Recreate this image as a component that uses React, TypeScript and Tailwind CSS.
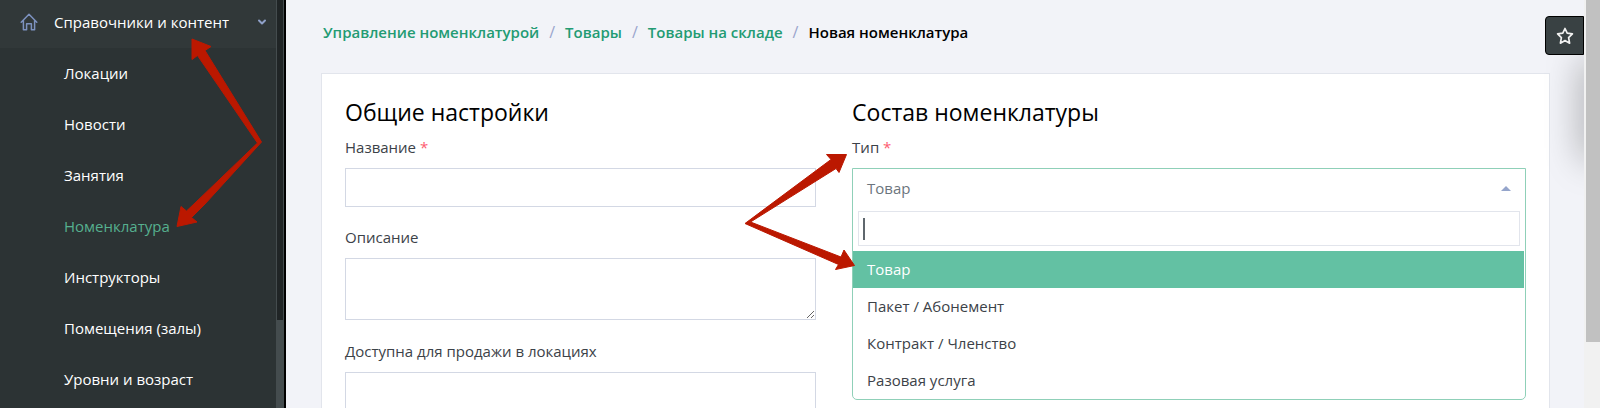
import React, { useState } from "react";
import { ChevronDown } from "lucide-react";

const MENU = ["Локации", "Новости", "Занятия", "Номенклатура", "Инструкторы", "Помещения (залы)", "Уровни и возраст"];
const CRUMBS = ["Управление номенклатурой", "Товары", "Товары на складе"];
const TYPES = ["Товар", "Пакет / Абонемент", "Контракт / Членство", "Разовая услуга"];

function HomeIcon() {
  return (
    <svg viewBox="0 0 18 18" className="h-[18px] w-[18px] shrink-0" fill="none" stroke="#7d92c0" strokeWidth="1.5" strokeLinejoin="round" strokeLinecap="round">
      <path d="M1.2 9.200 9 1.200 16.800 9.200M3.400 7.200v9.500h3.200v-6h4.800v6h3.200V7.200" />
    </svg>
  );
}

function StarIcon() {
  return (
    <svg viewBox="0 0 18 18" className="h-[18px] w-[18px]" fill="none" stroke="#f1f1f1" strokeWidth="1.7" strokeLinejoin="round">
      <path d="M9 1.500 11.200 6.200 16.400 6.900 12.600 10.600 13.600 16.200 9 13.600 4.400 16.200 5.400 10.600 1.600 6.900 6.800 6.200Z" />
    </svg>
  );
}

function Sidebar() {
  return (
    <aside className="flex w-[286px] shrink-0 border-r-2 border-black bg-[#2c3334]">
      <nav className="min-w-0 flex-1 text-[15px] font-medium text-white">
        <button type="button" className="flex h-12 w-full items-center bg-[#313839] pr-2 pb-1 pl-5 text-left">
          <HomeIcon />
          <span className="ml-4 flex-1 whitespace-nowrap">Справочники и контент</span>
          <ChevronDown className="h-3 w-3" color="#8fa0c8" strokeWidth={4} />
        </button>
        <ul>
          {MENU.map((item) => (
            <li key={item}>
              <a href="#" className={item === "Номенклатура" ? "flex h-[51px] items-center pl-16 text-[#56b08f]" : "flex h-[51px] items-center pl-16"}>
                {item}
              </a>
            </li>
          ))}
        </ul>
      </nav>
      <div className="w-2 shrink-0 bg-[#444c4e] px-px">
        <div className="h-80 bg-[#202526]" />
      </div>
    </aside>
  );
}

function Label({ htmlFor, required, children }: { htmlFor: string; required?: boolean; children: React.ReactNode }) {
  return (
    <label htmlFor={htmlFor} className="mb-2.5 block text-[15px] leading-[22px] text-[#3c4248]">
      {children}
      {required && <span className="text-[#fd5c70]"> *</span>}
    </label>
  );
}

function TypeSelect() {
  const [value, setValue] = useState("Товар");
  return (
    <div className="rounded-b-[5px] border border-[#8fd0b8] bg-white text-[15px]">
      <button id="type" type="button" aria-haspopup="listbox" aria-expanded="true" className="flex h-[38px] w-full items-center justify-between pr-3.5 pl-3.5 text-[#6c757d]">
        {value}
        <svg viewBox="0 0 10 5" className="h-[5px] w-[10px]" fill="#95a5cb">
          <path d="M5 0 10 5H0Z" />
        </svg>
      </button>
      <div className="mx-[5px] mt-1 mb-[5px] flex h-[35px] items-center border border-[#e2e5ec] pl-1">
        <span className="h-[22px] w-0.5 bg-[#5f676d]" />
        <input aria-label="Поиск" className="h-full min-w-0 flex-1 outline-none" />
      </div>
      <ul role="listbox" aria-label="Тип" className="mr-px">
        {TYPES.map((t) => (
          <li key={t} role="option" aria-selected={t === value} onClick={() => setValue(t)} className={t === value ? "flex h-[37px] items-center bg-[#63c1a3] pl-3.5 text-white" : "flex h-[37px] items-center pl-3.5 text-[#3c4248]"}>
            {t}
          </li>
        ))}
      </ul>
    </div>
  );
}

function Arrows() {
  return (
    <svg className="pointer-events-none absolute top-0 left-0 h-[408px] w-[900px]" viewBox="0 0 900 408" fill="#bb1800" stroke="#bb1800" strokeWidth="1" strokeLinejoin="round">
      <path d="M192 39 211 46.5 205 50.5 261.500 142 205 204 191.500 217.500 197 222 177 226.500 181 206.500 186.500 211 195 203 257.500 143 197.500 55.500 192 59.500Z" />
      <path d="M745 223.500 831 159.500 826.500 154.500 846.500 154.500 839 172.500 836 168.500 750.500 222 841 257 844 250 854.500 265.500 835.500 269.500 838.500 264.500Z" />
    </svg>
  );
}

export default function App() {
  return (
    <div className="relative flex h-screen overflow-hidden bg-[#f2f3f8] font-['Open_Sans','Noto_Sans',sans-serif]">
      <Sidebar />
      <main className="relative min-w-0 flex-1 overflow-hidden pr-[34px] pl-[35px]">
        <nav aria-label="Навигация" className="flex h-[73px] items-center pb-2 text-[15px] font-semibold">
          <ol className="flex gap-2.5 pl-0.5">
            {CRUMBS.map((c) => (
              <li key={c} className="flex gap-2.5">
                <a href="#" className="text-[#239b73]">{c}</a>
                <span className="text-base leading-[22px] font-normal text-[#9aa5cd]">/</span>
              </li>
            ))}
            <li className="text-black">Новая номенклатура</li>
          </ol>
        </nav>
        <section className="border border-[#e2e5ec] bg-white px-[23px] pt-6">
          <form className="-mx-[18px] flex">
            <div className="w-5/12 px-[18px]">
              <h2 className="mb-2.5 text-[23px] leading-7 font-medium text-black">Общие настройки</h2>
              <Label htmlFor="name" required>Название</Label>
              <input id="name" className="mb-[19px] block h-[39px] w-full border border-[#d3d8e4] px-3" />
              <Label htmlFor="description">Описание</Label>
              <textarea id="description" className="mb-5 block h-[62px] w-full resize border border-[#d3d8e4] px-3" />
              <Label htmlFor="locations">Доступна для продажи в локациях</Label>
              <input id="locations" className="block h-[60px] w-full border border-[#d3d8e4] px-3" />
            </div>
            <div className="w-7/12 px-[18px]">
              <h2 className="mb-2.5 text-[23px] leading-7 font-medium text-black">Состав номенклатуры</h2>
              <Label htmlFor="type" required>Тип</Label>
              <TypeSelect />
            </div>
          </form>
        </section>
        <div className="absolute top-[60px] -right-5 h-[100px] w-5 shadow-[0_0_36px_rgba(0,0,0,0.4)]" />
        <button type="button" aria-label="В избранное" className="absolute top-4 right-0 flex h-[39px] w-[39px] items-center justify-center rounded-l border border-black bg-[#394143]">
          <StarIcon />
        </button>
      </main>
      <div className="w-4 shrink-0 bg-[#f1f1f1] pl-0.5">
        <div className="h-[342px] bg-[#c1c1c1]" />
      </div>
      <Arrows />
    </div>
  );
}
